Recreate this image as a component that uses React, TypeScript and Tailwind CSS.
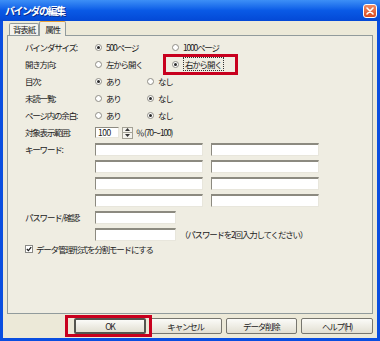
import type { ReactNode } from 'react';

function Radio({ checked }: { checked?: boolean }) {
  return (
    <span className="flex h-[7px] w-[7px] shrink-0 items-center justify-center rounded-full border border-[#8f8d86] bg-white">
      {checked && <span className="h-[3px] w-[3px] rounded-full bg-[#2a2a2a]" />}
    </span>
  );
}

function Option({ checked, width, children }: { checked?: boolean; width?: string; children: ReactNode }) {
  return (
    <div className={`flex items-center gap-[4px] ${width ?? ''}`}>
      <Radio checked={checked} />
      <span>{children}</span>
    </div>
  );
}

function Field({ className }: { className: string }) {
  return (
    <div
      className={`h-[13px] border border-t-2 border-[#8c8a80] border-r-[#e8e6dc] border-b-[#e8e6dc] bg-white ${className}`}
    />
  );
}

function Row({ label, children, h = 'h-[17px]' }: { label?: string; children?: ReactNode; h?: string }) {
  return (
    <div className={`flex ${h} items-center`}>
      <div className="w-[70px] shrink-0">{label}</div>
      {children}
    </div>
  );
}

function Button({ children, main }: { children: ReactNode; main?: boolean }) {
  return (
    <div
      className={`flex h-[16px] w-[72px] items-center justify-center rounded-[2px] bg-gradient-to-b from-[#fbfbf8] to-[#e2dfd2] ${
        main ? 'border-2 border-[#55554f]' : 'border border-[#77766f]'
      }`}
    >
      {children}
    </div>
  );
}

export default function App() {
  return (
    <div className="relative flex h-[341px] w-[380px] flex-col overflow-hidden bg-[#0a4ee0] font-['Noto_Sans_CJK_JP','Noto_Sans',sans-serif] text-[8.5px] tracking-[-1.2px] text-[#222]">
      {/* title bar */}
      <div className="flex h-[21px] shrink-0 items-center justify-between bg-gradient-to-b from-[#3d8ff6] via-[#0a5ae6] to-[#0448d6] pl-[5px] pr-[3px]">
        <span className="text-[10px] font-bold tracking-[-1.5px] text-white [text-shadow:1px_1px_0_#0b2c8c]">
          バインダの編集
        </span>
        <div className="flex h-[14px] w-[14px] items-center justify-center rounded-[3px] border border-white bg-gradient-to-b from-[#f08a63] to-[#d84a1f]">
          <svg width="8" height="8" viewBox="0 0 8 8">
            <path d="M1 1 L7 7 M7 1 L1 7" stroke="white" strokeWidth="1.6" strokeLinecap="round" />
          </svg>
        </div>
      </div>

      <div className="mx-[3px] mb-[3px] flex flex-1 flex-col bg-[#ece9d8] px-[4px]">
        {/* tabs */}
        <div className="flex h-[14px] shrink-0 items-end pl-[2px]">
          <div className="flex h-[12px] w-[30px] items-center justify-center rounded-t-[2px] border border-b-0 border-[#919b9c] bg-[#f4f3ee]">
            背表紙
          </div>
          <div className="relative z-10 -mb-px flex h-[15px] w-[27px] items-center justify-center rounded-t-[2px] border border-b-0 border-[#919b9c] border-t-[#e8a33c] bg-[#efede2]">
            属性
          </div>
        </div>

        {/* panel */}
        <div className="flex h-[279px] shrink-0 flex-col border border-[#919b9c] bg-[#efede2] pl-[17px] pt-[3px]">
          <Row label="バインダサイズ:">
            <Option checked width="w-[77px]">500ページ</Option>
            <Option>1000ページ</Option>
          </Row>
          <Row label="開き方向:">
            <Option width="w-[77px]">左から開く</Option>
            <Option checked>
              <span className="border border-dotted border-[#333] px-[1px]">右から開く</span>
            </Option>
          </Row>
          <Row label="目次:">
            <Option checked width="w-[52px]">あり</Option>
            <Option>なし</Option>
          </Row>
          <Row label="未読一覧:">
            <Option width="w-[52px]">あり</Option>
            <Option checked>なし</Option>
          </Row>
          <Row label="ページ内の余白:">
            <Option width="w-[52px]">あり</Option>
            <Option checked>なし</Option>
          </Row>
          <Row label="対象表示範囲:">
            <div className="flex h-[11px] w-[24px] items-center border border-[#8c8a80] border-r-[#e8e6dc] border-b-[#e8e6dc] bg-white pl-[2px] tracking-[-0.5px]">
              100
            </div>
            <div className="ml-[3px] flex h-[12px] w-[11px] flex-col border border-[#a3a195] bg-[#f3f2ec]">
              <div className="flex flex-1 items-center justify-center border-b border-[#a3a195]">
                <svg width="5" height="3" viewBox="0 0 5 3">
                  <path d="M0 3 L2.5 0 L5 3 Z" fill="#333" />
                </svg>
              </div>
              <div className="flex flex-1 items-center justify-center">
                <svg width="5" height="3" viewBox="0 0 5 3">
                  <path d="M0 0 L2.5 3 L5 0 Z" fill="#333" />
                </svg>
              </div>
            </div>
            <span className="ml-[3px]">％ (70～100)</span>
          </Row>
          {[0, 1, 2, 3].map((i) => (
            <Row key={i} label={i === 0 ? 'キーワード:' : undefined}>
              <div className="flex gap-[8px]">
                <Field className="w-[108px]" />
                <Field className="w-[108px]" />
              </div>
            </Row>
          ))}
          <Row label="パスワード/確認:">
            <Field className="w-[81px]" />
          </Row>
          <Row>
            <Field className="w-[81px]" />
            <span className="ml-[4px]">（パスワードを2回入力してください）</span>
          </Row>
          <div className="flex h-[12px] items-center gap-[3px]">
            <span className="flex h-[8px] w-[8px] items-center justify-center border border-[#8a8a86] bg-white">
              <svg width="6" height="6" viewBox="0 0 6 6">
                <path d="M0.8 3 L2.4 4.6 L5.2 1.2" stroke="#1c1c1c" strokeWidth="1.3" fill="none" />
              </svg>
            </span>
            <span>データ管理形式を分割モードにする</span>
          </div>
        </div>

        {/* buttons */}
        <div className="mt-[4px] flex gap-[4px] pl-[67px]">
          <Button main>OK</Button>
          <Button>キャンセル</Button>
          <Button>データ削除</Button>
          <Button>ヘルプ(H)</Button>
        </div>
      </div>

      {/* red annotation boxes */}
      <div className="absolute left-[163px] top-[54px] h-[21px] w-[75px] border-[3px] border-[#c8001e]" />
      <div className="absolute left-[65px] top-[315px] h-[22px] w-[87px] border-[3px] border-[#c8001e]" />
    </div>
  );
}
